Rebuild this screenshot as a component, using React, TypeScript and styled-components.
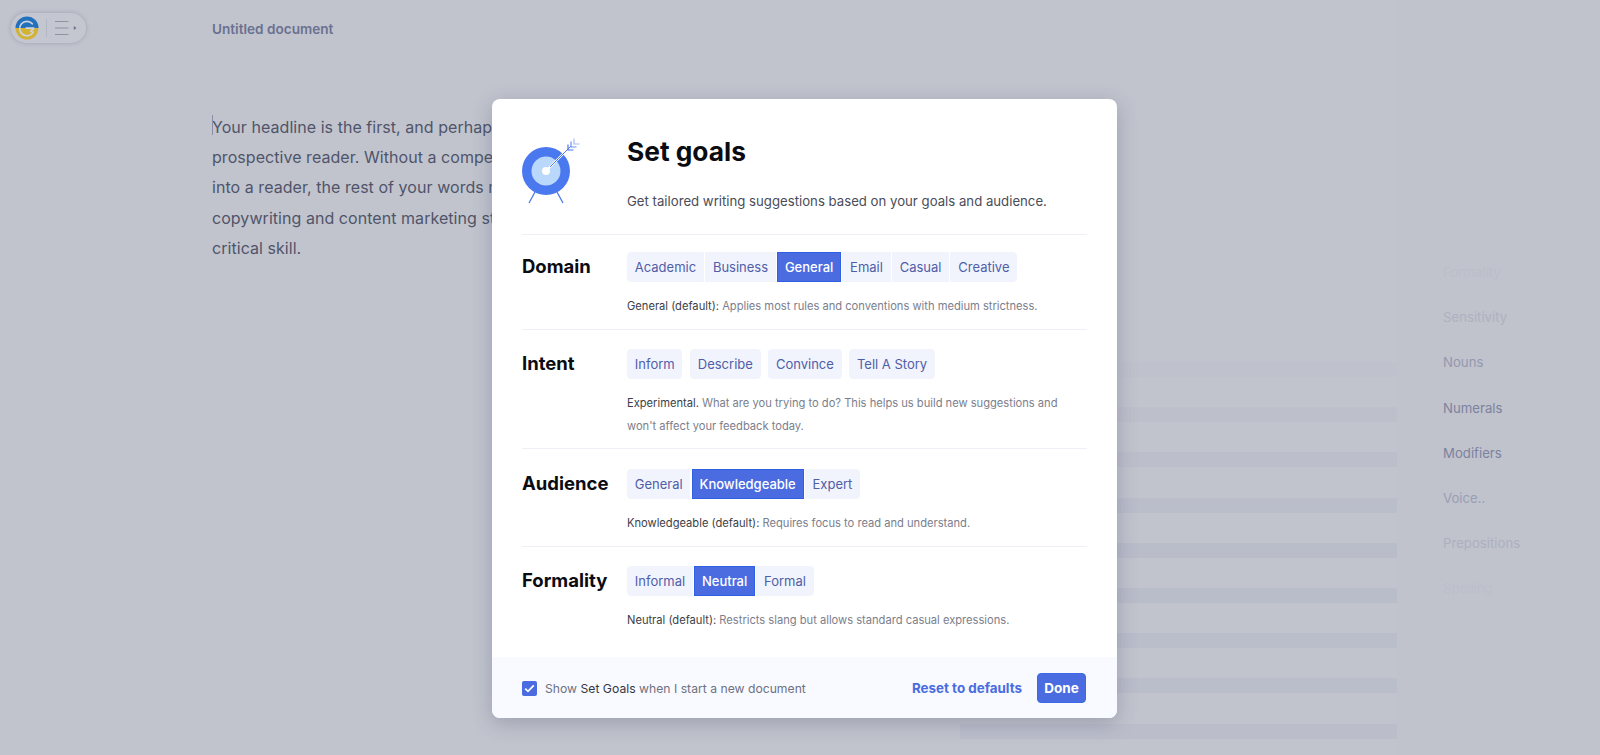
import React from "react";
import styled, { createGlobalStyle } from "styled-components";

const Global = createGlobalStyle`
  html, body { margin: 0; padding: 0; height: 100%; }
  body { background: #c1c4cd; font-family: Inter, "Liberation Sans", sans-serif; overflow: hidden; }
`;

const Page = styled.div`
  position: relative;
  width: 1600px;
  height: 755px;
  overflow: hidden;
  display: grid;
  grid-template-columns: 212px 748px 437px 203px;
  background: #c1c4cd;
`;

const Rail = styled.div`
  padding: 13px 0 0 11px;
`;

const LogoPill = styled.div`
  width: 75px;
  height: 30px;
  box-sizing: border-box;
  border-radius: 15px;
  background: #c4c7d0;
  box-shadow: 0 0 4px rgba(70, 76, 105, 0.28);
  display: flex;
  align-items: center;
  padding-left: 4px;
`;

const PillDivider = styled.span`
  width: 1px;
  height: 18px;
  background: #b3b6c3;
  margin: 0 8px 0 7px;
`;

const DocColumn = styled.div`
  display: flex;
  flex-direction: column;
`;

const DocTitle = styled.div`
  margin-top: 20px;
  height: 18px;
  font-size: 13.6px;
  line-height: 18px;
  font-weight: 600;
  color: #6b7190;
`;

const DocText = styled.p`
  position: relative;
  margin: 74px 0 0;
  font-size: 16px;
  line-height: 30.2px;
  letter-spacing: 0.05px;
  color: #50546a;
  white-space: nowrap;
  &::before {
    content: "";
    position: absolute;
    left: 0;
    top: 3px;
    width: 1px;
    height: 20px;
    background: #8a8fa8;
  }
`;

const StripeColumn = styled.div`
  display: flex;
  flex-direction: column;
  gap: 30.2px;
  padding-top: 362px;
`;

const Stripe = styled.div<{ $tone: string }>`
  height: 15px;
  flex: none;
  background: ${(p) => p.$tone};
`;

const SideColumn = styled.div`
  display: flex;
  flex-direction: column;
  padding: 261px 0 0 46px;
  background: #c0c3cc;
`;

const SideItem = styled.div<{ $color: string }>`
  height: 45.2px;
  flex: none;
  font-size: 13.2px;
  line-height: 22px;
  color: ${(p) => p.$color};
`;

const Modal = styled.div`
  position: absolute;
  left: 492px;
  top: 99px;
  width: 625px;
  height: 619px;
  background: #fff;
  border-radius: 8px;
  box-shadow: 0 5px 20px rgba(60, 66, 100, 0.28);
  display: flex;
  flex-direction: column;
  overflow: hidden;
`;

const Body = styled.div`
  flex: 1;
  padding: 0 30px;
`;

const Header = styled.div`
  height: 135px;
  display: grid;
  grid-template-columns: 105px 1fr;
  border-bottom: 1px solid #eef0f8;
`;

const IconCell = styled.div`
  padding-top: 35px;
`;

const HeaderText = styled.div`
  padding-top: 34px;
`;

const Title = styled.h1`
  margin: 0;
  font-size: 26.3px;
  line-height: 38px;
  font-weight: 700;
  color: #0b0c12;
`;

const Subtitle = styled.p`
  margin: 20px 0 0;
  font-size: 13.2px;
  line-height: 20px;
  color: #4a4c59;
`;

const Section = styled.section<{ $height: number; $pad: number; $last?: boolean }>`
  display: grid;
  grid-template-columns: 105px 1fr;
  box-sizing: border-box;
  height: ${(p) => p.$height}px;
  padding-top: ${(p) => p.$pad}px;
  border-bottom: ${(p) => (p.$last ? "0" : "1px solid #eef0f8")};
`;

const Label = styled.h2`
  margin: 0;
  font-size: 18.5px;
  line-height: 29px;
  font-weight: 700;
  color: #0b0c12;
`;

const Chips = styled.div<{ $gap: number }>`
  display: flex;
  gap: ${(p) => p.$gap}px;
`;

const Chip = styled.button<{ $active?: boolean; $split?: boolean }>`
  height: 30px;
  box-sizing: border-box;
  padding: 0 6.8px;
  font: 400 13px/28px Inter, "Liberation Sans", sans-serif;
  color: ${(p) => (p.$active ? "#fff" : "#4f5ea9")};
  font-weight: ${(p) => (p.$active ? 500 : 400)};
  background: ${(p) => (p.$active ? "#4a6ce0" : "#f2f4fd")};
  border: 1px solid ${(p) => (p.$active ? "#2f60e3" : "#f2f4fd")};
  border-radius: ${(p) => (p.$split ? "4px" : "0")};
  &:first-child { border-top-left-radius: 4px; border-bottom-left-radius: 4px; }
  &:last-child { border-top-right-radius: 4px; border-bottom-right-radius: 4px; }
`;

const Description = styled.p`
  margin: 12.5px 0 0;
  font-size: 11.15px;
  line-height: 23px;
  color: #7b7e8c;
  b { font-weight: 400; color: #3c3e48; }
`;

const Footer = styled.footer`
  height: 61px;
  flex: none;
  background: #f9faff;
  display: flex;
  align-items: center;
  padding: 0 31px 0 30px;
`;

const CheckBox = styled.span`
  width: 15px;
  height: 15px;
  margin-top: 2px;
  border-radius: 2px;
  background: #4a6ce0;
  display: flex;
  align-items: center;
  justify-content: center;
`;

const CheckLabel = styled.span`
  margin: 2px 0 0 8px;
  font-size: 12.2px;
  color: #6e717f;
  flex: 1;
  b { font-weight: 400; color: #34363f; }
`;

const ResetLink = styled.a`
  font-size: 13.4px;
  font-weight: 700;
  color: #4a6ce0;
  margin-right: 15px;
`;

const DoneButton = styled.button`
  width: 49px;
  height: 30px;
  padding: 0;
  border: 1px solid #3f68e3;
  border-radius: 4px;
  background: #4a6ce0;
  color: #fff;
  font: 700 13.5px Inter, "Liberation Sans", sans-serif;
`;

const Logo = () => (
  <svg width="24" height="24" viewBox="0 0 24 24">
    <defs>
      <clipPath id="c"><circle cx="12" cy="12" r="11.5" /></clipPath>
    </defs>
    <g clipPath="url(#c)">
      <rect width="24" height="12" fill="#2370bd" />
      <rect y="12" width="24" height="12" fill="#d2b336" />
    </g>
    <path d="M17.3 7.8A7.2 7.2 0 1 0 18.3 15.8" fill="none" stroke="#cfd3de" strokeWidth="1.7" strokeLinecap="round" />
    <path d="M11.2 12.2H18.8L15.8 15.4" fill="none" stroke="#cfd3de" strokeWidth="1.7" strokeLinecap="round" strokeLinejoin="round" />
  </svg>
);

const Menu = () => (
  <svg width="24" height="16" viewBox="0 0 24 16">
    <path d="M0 1.5H13.5M0 8H13.5M0 14.5H13.5" stroke="#8e92a6" strokeWidth="1.2" />
    <path d="M18.8 6L21.4 8L18.8 10Z" fill="#6c7089" />
  </svg>
);

const Target = () => (
  <svg width="66" height="70" viewBox="0 0 66 70">
    <path d="M13 58L7 69M35 58L41 69" stroke="#4c78ec" strokeWidth="1.3" />
    <circle cx="24" cy="37" r="24" fill="#4a78ef" />
    <circle cx="24" cy="37" r="14.5" fill="#b9d8fb" />
    <circle cx="24" cy="37" r="4" fill="#fff" />
    <path d="M24 37L46 15" stroke="#fff" strokeWidth="2.2" />
    <path d="M28 33L49 12" stroke="#4a78ef" strokeWidth="1" />
    <path d="M46 10.5V16H51.5" fill="none" stroke="#4a78ef" strokeWidth="1.2" />
    <path d="M49 7.5V13H54.5" fill="none" stroke="#6f92f0" strokeWidth="1.2" />
    <path d="M52 4.5V10H57.5" fill="none" stroke="#a5bcf6" strokeWidth="1.2" />
  </svg>
);

const Check = () => (
  <svg width="11" height="9" viewBox="0 0 11 9">
    <path d="M1.2 4.6L4 7.4L9.8 1.4" fill="none" stroke="#fff" strokeWidth="1.7" />
  </svg>
);

const sideItems: [string, string][] = [
  ["Formality", "#bbbeca"],
  ["Sensitivity", "#aeb1c1"],
  ["Nouns", "#9498af"],
  ["Numerals", "#7d82a0"],
  ["Modifiers", "#7d82a0"],
  ["Voice..", "#9a9eb3"],
  ["Prepositions", "#adb0c0"],
  ["Spelling", "#bcbfcb"],
];

const stripes = ["#bfc2cc", "#bdc0cb", "#bcbfcb", "#babdca", "#b9bcc9", "#b9bcc9", "#babdca", "#babdca", "#bbbeca"];

const Group = ({ items, active, gap = 1.2, split = false }: { items: string[]; active?: string; gap?: number; split?: boolean }) => (
  <Chips $gap={gap}>
    {items.map((t) => (
      <Chip key={t} $active={t === active} $split={split}>{t}</Chip>
    ))}
  </Chips>
);

export default function App() {
  return (
    <Page>
      <Global />
      <Rail>
        <LogoPill>
          <Logo />
          <PillDivider />
          <Menu />
        </LogoPill>
      </Rail>
      <DocColumn>
        <DocTitle>Untitled document</DocTitle>
        <DocText>
          Your headline is the first, and perhaps the only, impression you make on a<br />
          prospective reader. Without a compelling headline that turns a browser<br />
          into a reader, the rest of your words may as well not exist. That is why<br />
          copywriting and content marketing students learn this as their most<br />
          critical skill.
        </DocText>
      </DocColumn>
      <StripeColumn>
        {stripes.map((tone, i) => (
          <Stripe key={i} $tone={tone} />
        ))}
      </StripeColumn>
      <SideColumn>
        {sideItems.map(([t, c]) => (
          <SideItem key={t} $color={c}>{t}</SideItem>
        ))}
      </SideColumn>
      <Modal>
        <Body>
          <Header>
            <IconCell><Target /></IconCell>
            <HeaderText>
              <Title>Set goals</Title>
              <Subtitle>Get tailored writing suggestions based on your goals and audience.</Subtitle>
            </HeaderText>
          </Header>
          <Section $height={95} $pad={17}>
            <Label>Domain</Label>
            <div>
              <Group items={["Academic", "Business", "General", "Email", "Casual", "Creative"]} active="General" />
              <Description><b>General (default):</b> Applies most rules and conventions with medium strictness.</Description>
            </div>
          </Section>
          <Section $height={119} $pad={19}>
            <Label>Intent</Label>
            <div>
              <Group items={["Inform", "Describe", "Convince", "Tell A Story"]} gap={7.5} split />
              <Description><b>Experimental.</b> What are you trying to do? This helps us build new suggestions and won't affect your feedback today.</Description>
            </div>
          </Section>
          <Section $height={98} $pad={20}>
            <Label>Audience</Label>
            <div>
              <Group items={["General", "Knowledgeable", "Expert"]} active="Knowledgeable" />
              <Description><b>Knowledgeable (default):</b> Requires focus to read and understand.</Description>
            </div>
          </Section>
          <Section $height={90} $pad={19} $last>
            <Label>Formality</Label>
            <div>
              <Group items={["Informal", "Neutral", "Formal"]} active="Neutral" />
              <Description><b>Neutral (default):</b> Restricts slang but allows standard casual expressions.</Description>
            </div>
          </Section>
        </Body>
        <Footer>
          <CheckBox><Check /></CheckBox>
          <CheckLabel>Show <b>Set Goals</b> when I start a new document</CheckLabel>
          <ResetLink>Reset to defaults</ResetLink>
          <DoneButton>Done</DoneButton>
        </Footer>
      </Modal>
    </Page>
  );
}
